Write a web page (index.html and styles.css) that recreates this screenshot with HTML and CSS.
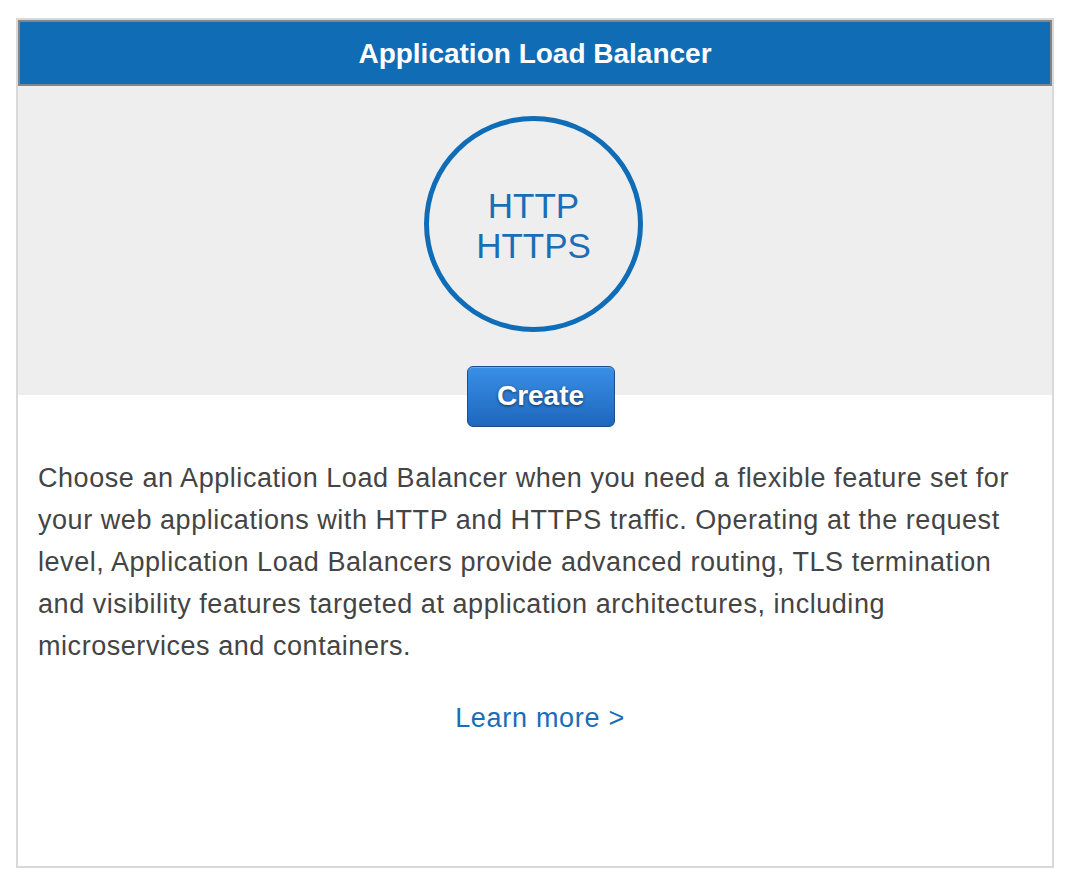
FILE: index.html
```html
<!DOCTYPE html>
<html>
<head>
<meta charset="utf-8">
<link rel="stylesheet" href="styles.css">
</head>
<body>
<div class="card">
  <div class="card-header">Application Load Balancer</div>
  <div class="hero">
    <div class="circle">
      <span>HTTP</span>
      <span>HTTPS</span>
    </div>
    <button class="create-btn">Create</button>
  </div>
  <div class="card-body">
    <p class="desc">Choose an Application Load Balancer when you need a flexible feature set for your web applications with HTTP and HTTPS traffic. Operating at the request level, Application Load Balancers provide advanced routing, TLS termination and visibility features targeted at application architectures, including microservices and containers.</p>
    <a class="learn" href="#">Learn more &gt;</a>
  </div>
</div>
</body>
</html>
```

FILE: styles.css
```css
html, body {
  margin: 0;
  padding: 0;
  background: #fff;
}
body {
  padding: 18px 16px 0 16px;
  font-family: "Liberation Sans", Arial, Helvetica, sans-serif;
}
.card {
  width: 1034px;
  height: 846px;
  border: 2px solid #d9d9d9;
  background: #fff;
  display: flex;
  flex-direction: column;
}
.card-header {
  box-sizing: border-box;
  height: 66px;
  border: 2px solid #858585;
  background: #0f6cb5;
  color: #fff;
  font-weight: bold;
  font-size: 28px;
  display: flex;
  align-items: center;
  justify-content: center;
  padding-top: 2px;
}
.hero {
  background: #eeeeee;
  display: flex;
  flex-direction: column;
  align-items: center;
  padding-top: 30px;
}
.circle {
  box-sizing: border-box;
  width: 219px;
  height: 216px;
  margin-right: 3px;
  border: 5px solid #0f6cb6;
  border-radius: 50%;
  display: flex;
  flex-direction: column;
  align-items: center;
  justify-content: center;
  color: #1a6db7;
  font-size: 35px;
  line-height: 40px;
  padding-top: 4px;
}
.circle span {
  display: block;
}
.create-btn {
  margin-top: 34px;
  margin-bottom: -32px;
  margin-left: 11px;
  width: 148px;
  height: 61px;
  border: 1px solid #1b4f8a;
  border-radius: 6px;
  background: linear-gradient(#3a8fe6, #1e67bd);
  color: #fff;
  font-family: "Liberation Sans", Arial, sans-serif;
  font-weight: bold;
  font-size: 28px;
  text-shadow: 0 1px 3px rgba(0,0,0,0.6);
  box-shadow: inset 0 1px 0 rgba(255,255,255,0.25);
  padding: 0 0 2px 0;
  cursor: pointer;
}
.card-body {
  padding: 62px 20px 0 20px;
  display: flex;
  flex-direction: column;
  align-items: center;
}
.desc {
  margin: 0;
  align-self: stretch;
  font-size: 27px;
  letter-spacing: 0.55px;
  line-height: 42px;
  color: #444;
}
.learn {
  margin-top: 30px;
  margin-left: 10px;
  font-size: 27px;
  letter-spacing: 0.7px;
  line-height: 42px;
  color: #1a6db7;
  text-decoration: none;
}
```
